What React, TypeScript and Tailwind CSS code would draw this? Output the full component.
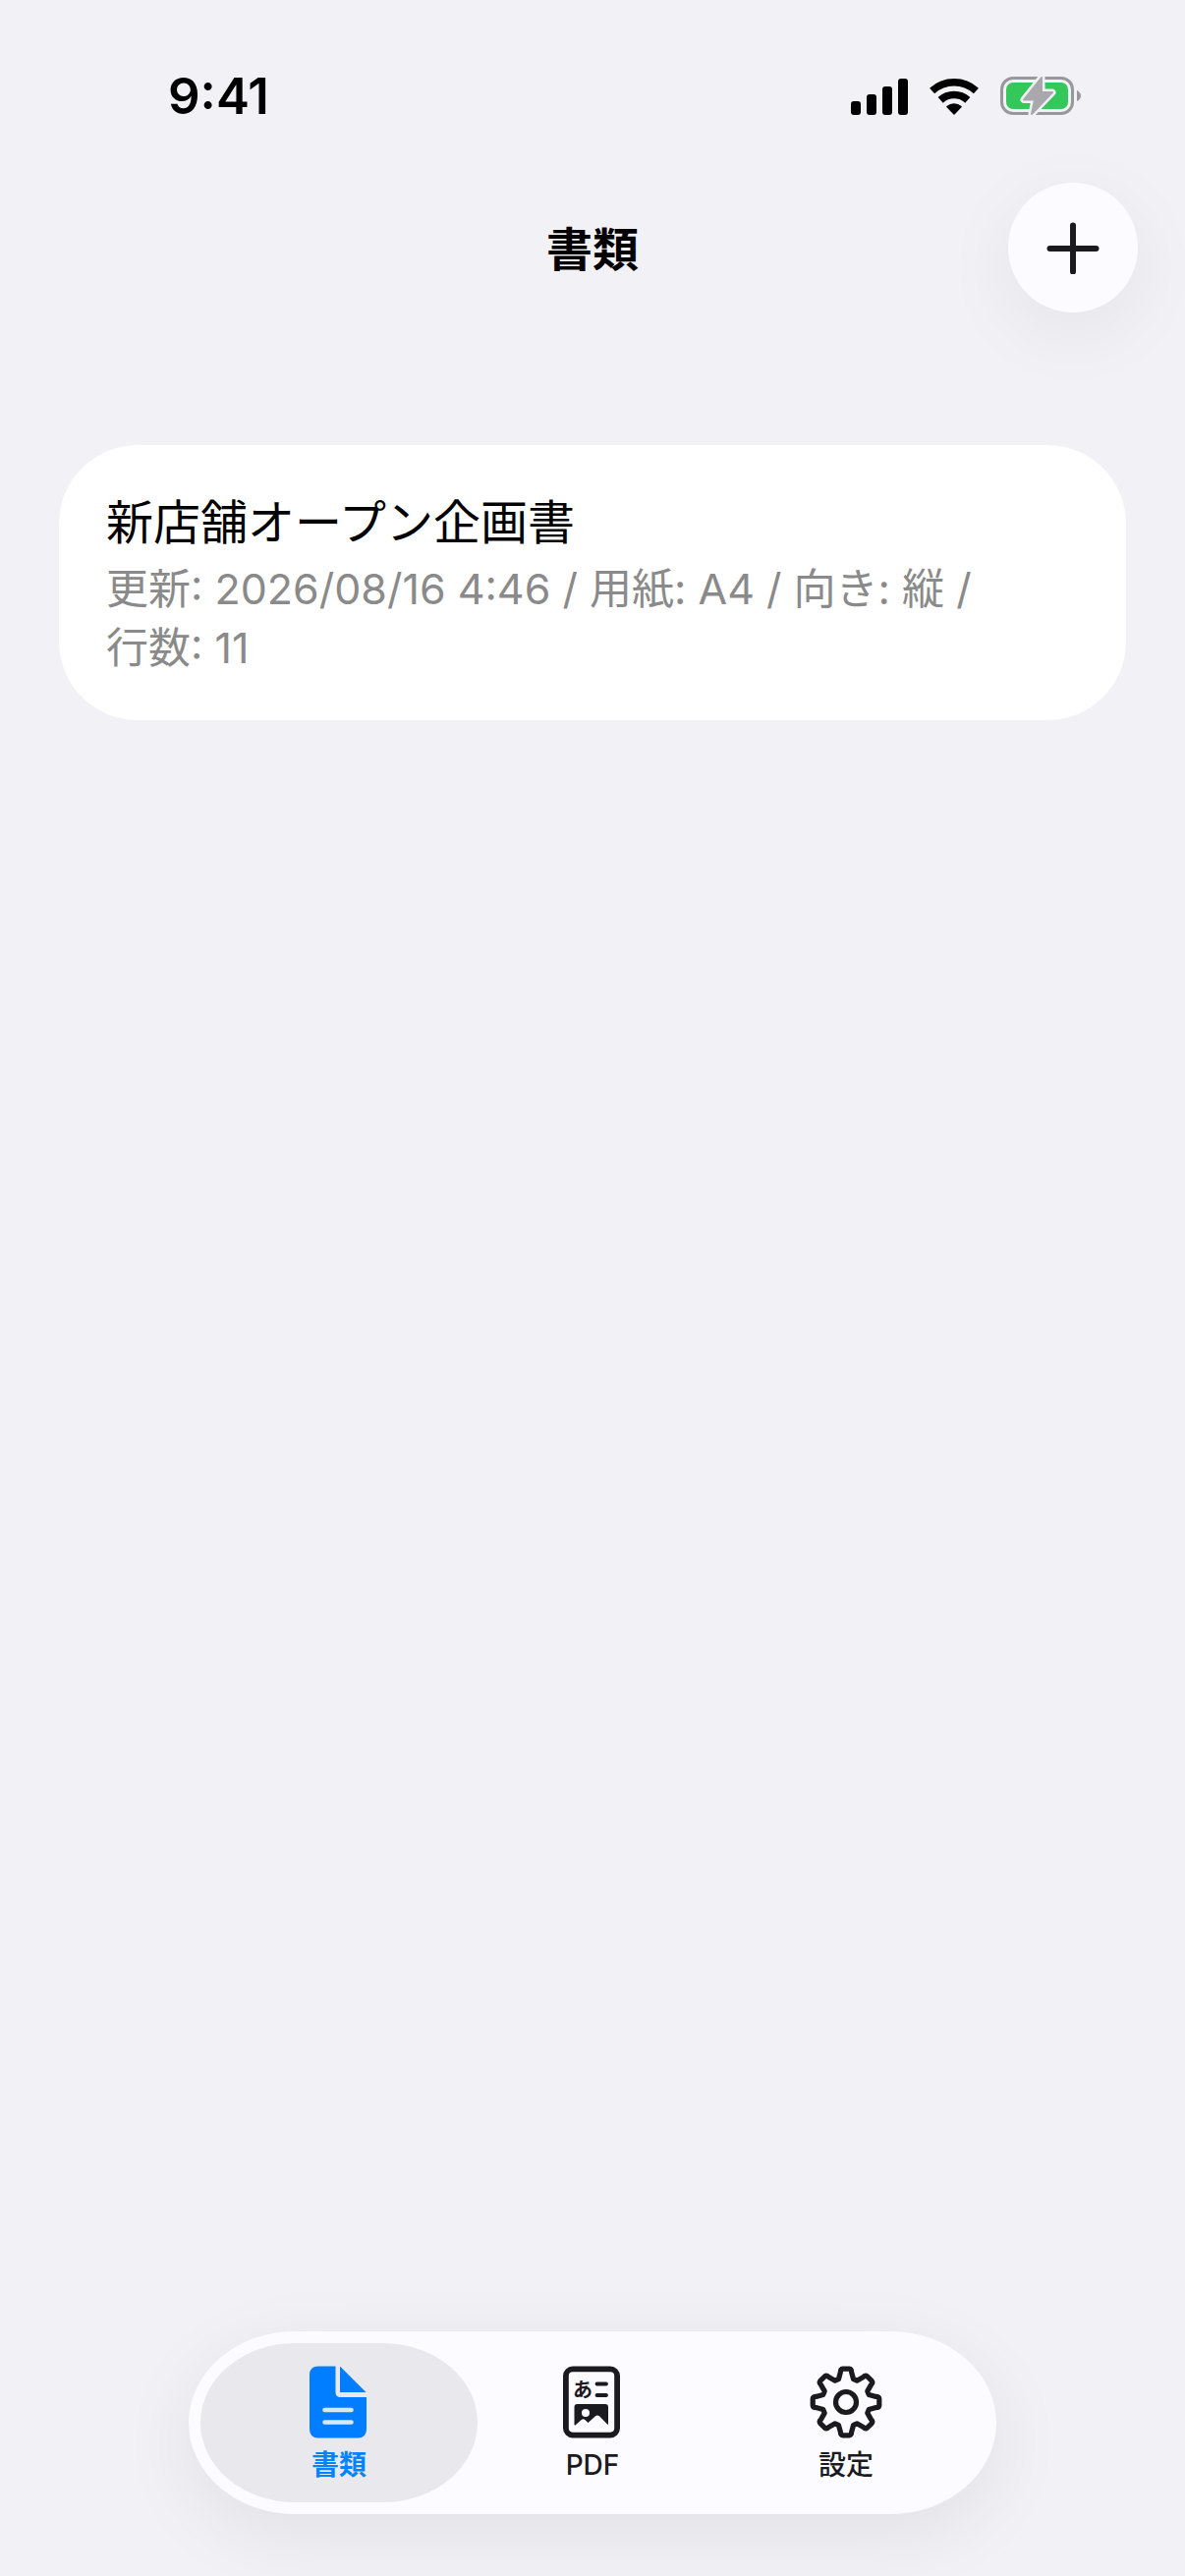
import { useState } from "react";
import type { ReactNode } from "react";

type Doc = {
  id: number;
  title: string;
  updatedAt: string;
  paper: string;
  direction: string;
  lines: number;
};

const documents: Doc[] = [
  {
    id: 1,
    title: "新店舗オープン企画書",
    updatedAt: "2026/08/16 4:46",
    paper: "A4",
    direction: "縦",
    lines: 11,
  },
];

// 歯車の輪郭（8枚歯）
const gearPath = () => {
  const point = (deg: number, r: number) => {
    const a = (deg * Math.PI) / 180;
    return `${(37 + r * Math.sin(a)).toFixed(1)} ${(37 - r * Math.cos(a)).toFixed(1)}`;
  };
  let d = "";
  for (let i = 0; i < 8; i++) {
    const c = i * 45;
    d += `${i === 0 ? "M" : "L"}${point(c - 18, 24.5)}`;
    d += `L${point(c - 10.5, 31)}Q${point(c - 9.5, 34)} ${point(c - 5.5, 34)}`;
    d += `L${point(c + 5.5, 34)}Q${point(c + 9.5, 34)} ${point(c + 10.5, 31)}`;
    d += `L${point(c + 18, 24.5)}`;
  }
  return d + "Z";
};

const SignalIcon = () => (
  <svg width="58" height="38" viewBox="0 0 58 38" aria-hidden="true">
    <rect x="0" y="24" width="10" height="14" rx="3" />
    <rect x="16" y="17" width="10" height="21" rx="3" />
    <rect x="32" y="9" width="10" height="29" rx="3" />
    <rect x="48" y="1" width="10" height="37" rx="3" />
  </svg>
);

const WifiIcon = () => (
  <svg width="50" height="38" viewBox="0 -1 50 38" aria-hidden="true">
    <g fill="none" stroke="black" strokeWidth="7.6">
      <path d="M2.6 12.5A33.2 33.2 0 0 1 47.4 12.5" />
      <path d="M11.2 21.9A20.5 20.5 0 0 1 38.8 21.9" />
    </g>
    <path d="M25 37L17.3 29Q17 28.5 17.5 28A11.7 11.7 0 0 1 32.5 28Q33 28.5 32.7 29Z" />
  </svg>
);

const BatteryIcon = () => (
  <svg width="82" height="40" viewBox="0 0 82 40" aria-hidden="true">
    <rect x="1.5" y="1.5" width="72" height="36" rx="11.5" fill="none" stroke="#98979c" strokeWidth="3" />
    <rect x="6" y="6" width="63" height="27" rx="7" fill="#34c759" />
    <path d="M78 14Q82 16 82 19.5Q82 23 78 25Z" fill="#98979c" />
    <path
      d="M42 1L24 23.5H35L32 38L53 16H42Z"
      fill="#f1f1f6"
      stroke="#f1f1f6"
      strokeWidth="7"
      strokeLinejoin="round"
    />
    <path d="M42 1L24 23.5H35L32 38L53 16H42Z" fill="#a9a8ad" stroke="#a9a8ad" strokeWidth="2" strokeLinejoin="round" />
  </svg>
);

const PlusIcon = () => (
  <svg width="54" height="54" viewBox="0 0 54 54" aria-hidden="true">
    <path d="M27 4.5V51.5M3.5 28H50.5" stroke="#1b1a1f" strokeWidth="6" strokeLinecap="round" />
  </svg>
);

const DocumentIcon = () => (
  <svg width="60" height="74" viewBox="0 0 60 74" aria-hidden="true">
    <path
      d="M9 0.5H26.5V27Q26.5 32 31.5 32H58V64.5Q58 73.5 49 73.5H9Q0 73.5 0 64.5V9.5Q0 0.5 9 0.5Z"
      fill="#007eff"
    />
    <path d="M31 1Q31 0.5 31.5 1L57 26.5Q57.5 27 57 27H31Z" fill="#007eff" />
    <path d="M15.5 45H42.5M15.5 57.5H42.5" stroke="#d9e8fa" strokeWidth="4.6" strokeLinecap="round" />
  </svg>
);

const PdfIcon = () => (
  <svg width="60" height="74" viewBox="0 0 60 74" aria-hidden="true">
    <rect x="2.9" y="3.4" width="52.2" height="67.2" rx="7" fill="none" stroke="#1b1a1f" strokeWidth="5.8" />
    <text
      x="20"
      y="32"
      fontSize="20"
      fontWeight="700"
      textAnchor="middle"
      fill="#1b1a1f"
      fontFamily="'Noto Sans CJK JP', sans-serif"
    >
      あ
    </text>
    <path d="M34.5 18.5H44M34.5 30H44" stroke="#1b1a1f" strokeWidth="3.8" strokeLinecap="round" />
    <path
      d="M14.5 39H43Q46 39 46 42V59Q46 60.5 44.8 59.3L37 51.3Q35 49.5 33 51.3L25.5 58L22.3 55Q20.5 53.5 18.7 55L12.8 60.2Q11.5 61 11.5 59.5V42Q11.5 39 14.5 39Z"
      fill="#1b1a1f"
    />
    <circle cx="23" cy="48" r="4" fill="#fcfbff" />
  </svg>
);

const GearIcon = () => (
  <svg width="74" height="74" viewBox="0 0 74 74" aria-hidden="true">
    <g fill="none" stroke="#1b1a1f" strokeWidth="5.2" strokeLinejoin="round">
      <path d={gearPath()} />
      <circle cx="37" cy="37" r="10.5" />
    </g>
  </svg>
);

const tabs: { id: string; label: string; icon: ReactNode }[] = [
  { id: "documents", label: "書類", icon: <DocumentIcon /> },
  { id: "pdf", label: "PDF", icon: <PdfIcon /> },
  { id: "settings", label: "設定", icon: <GearIcon /> },
];

export default function App() {
  const [activeTab, setActiveTab] = useState("documents");

  return (
    <div
      lang="ja"
      className="flex min-h-screen flex-col bg-[#f1f1f6] font-['Inter','Noto_Sans_CJK_JP',sans-serif] text-black"
    >
      {/* ステータスバー */}
      <div className="flex h-[128px] items-center justify-between pt-[68px] pr-[106px] pl-[171px]">
        <span className="text-[51px] leading-[60px] font-semibold">9:41</span>
        <div className="flex items-center gap-[22px]">
          <SignalIcon />
          <WifiIcon />
          <BatteryIcon />
        </div>
      </div>

      <header className="mt-[58px] grid grid-cols-[132px_1fr_132px] items-center px-12">
        <h1 className="col-start-2 pt-1 text-center text-[47px] leading-[60px] font-bold">書類</h1>
        <button
          type="button"
          aria-label="追加"
          className="flex size-[132px] items-center justify-center rounded-full bg-[#fcfbff] shadow-[0_20px_80px_rgba(0,0,0,0.06)]"
        >
          <PlusIcon />
        </button>
      </header>

      {/* 書類一覧 */}
      <main className="mt-[135px] flex-1 px-[60px]">
        <ul className="flex flex-col gap-6">
          {documents.map((doc) => (
            <li key={doc.id}>
              <button type="button" className="block w-full rounded-[80px] bg-white px-12 pt-[47px] pb-11 text-left">
                <span className="block text-[48px] leading-[64px]">{doc.title}</span>
                <span className="mt-[5px] block text-[43px] leading-[60px] text-[#8a8a8a]">
                  更新: {doc.updatedAt} / 用紙: {doc.paper} / 向き: {doc.direction} /{" "}
                  <span className="inline-block">行数: {doc.lines}</span>
                </span>
              </button>
            </li>
          ))}
        </ul>
      </main>

      {/* タブバー */}
      <div className="flex justify-center pb-[63px]">
        <nav className="flex rounded-[108px/93px] bg-[#fcfbff] p-3 shadow-[0_20px_80px_rgba(0,0,0,0.07)]">
          {tabs.map((tab) => (
            <button
              key={tab.id}
              type="button"
              onClick={() => setActiveTab(tab.id)}
              aria-current={tab.id === activeTab ? "page" : undefined}
              className={`-ml-6 flex h-[162px] w-[282px] flex-col items-center rounded-[96px/81px] pt-[23px] first:ml-0 ${
                tab.id === activeTab ? "bg-[#e9e9ed] font-bold text-[#0083ff]" : "font-medium text-[#1b1a1f]"
              }`}
            >
              {tab.icon}
              <span className="mt-[11px] text-[28px] leading-8">{tab.label}</span>
            </button>
          ))}
        </nav>
      </div>
    </div>
  );
}
